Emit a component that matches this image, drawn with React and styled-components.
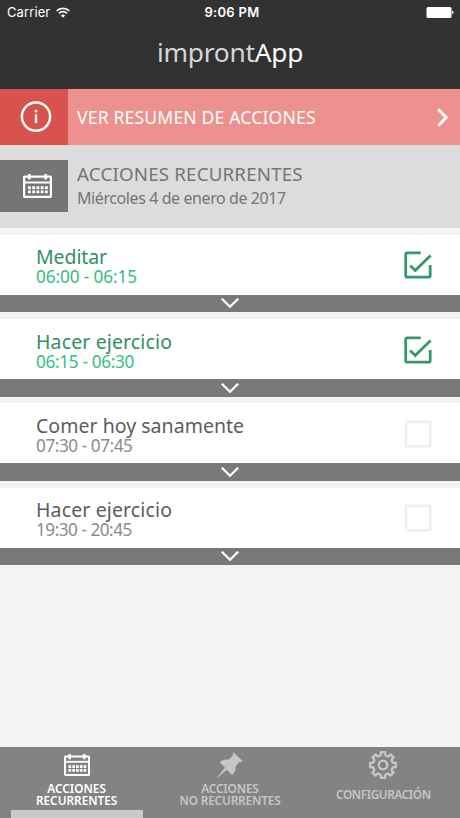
import styled, { createGlobalStyle } from 'styled-components'

const GlobalStyle = createGlobalStyle`
  * { box-sizing: border-box; }
  body {
    margin: 0;
    background: #f3f3f3;
    font-family: "Noto Sans", "Open Sans", sans-serif;
  }
  svg { display: block; }
`;

const Screen = styled.div`
  display: flex;
  flex-direction: column;
  width: 460px;
  height: 818px;
  overflow: hidden;
  background: #f3f3f3;
`;

const Header = styled.header`
  height: 89px;
  flex: none;
  background: #323232;
  color: #fff;
`;

const StatusBar = styled.div`
  display: grid;
  grid-template-columns: 1fr auto 1fr;
  align-items: center;
  height: 24px;
  padding: 0 6px 0 7px;
  font-family: Inter, sans-serif;
  font-size: 13px;
`;

const Carrier = styled.div`
  display: flex;
  align-items: center;
  gap: 6px;
  letter-spacing: 0.1px;
`;

const Clock = styled.div`
  padding-left: 3px;
  font-weight: 600;
  letter-spacing: 0.3px;
`;

const Battery = styled.div`
  display: flex;
  justify-content: flex-end;
`;

const AppTitle = styled.h1`
  margin: 11px 0 0;
  text-align: center;
  font-size: 26.3px;
  line-height: 34px;
  font-weight: 400;
  letter-spacing: -0.25px;
  color: #d6d6d6;

  span { color: #fff; }
`;

const SummaryBar = styled.button`
  display: flex;
  align-items: stretch;
  flex: none;
  height: 56px;
  padding: 0 12px 0 0;
  border: 0;
  background: #ec918d;
  color: #fff;
  font-family: inherit;
  text-align: left;
`;

const IconBox = styled.div`
  display: flex;
  align-items: center;
  justify-content: center;
  flex: none;
  width: 68px;
  height: ${p => p.$height};
  padding-left: ${p => p.$shift};
  background: ${p => p.$color};
`;

const SummaryLabel = styled.span`
  flex: 1;
  padding-left: 9px;
  font-size: 17.6px;
  line-height: 56px;
  letter-spacing: 0.15px;
  white-space: nowrap;
`;

const ArrowWrap = styled.span`
  display: flex;
  align-items: center;
`;

const DateBar = styled.section`
  display: flex;
  flex: none;
  height: 83px;
  padding-top: 15px;
  background: #dcdcdc;
  color: #757575;
`;

const DateText = styled.div`
  padding: 2px 0 0 9px;
`;

const Line = styled.div`
  font-size: ${p => p.$size};
  line-height: ${p => p.$line};
  letter-spacing: ${p => p.$spacing || 'normal'};
  color: ${p => p.$color || 'inherit'};
  white-space: nowrap;
`;

const TaskList = styled.main`
  flex: 1;
`;

const Task = styled.article`
  margin-top: 6.7px;
`;

const TaskBody = styled.div`
  display: flex;
  justify-content: space-between;
  height: 60px;
  padding: 10.5px 28px 0 36px;
  background: #fff;
`;

const TaskText = styled.div`
  padding-top: 2px;
`;

const CheckWrap = styled.div`
  padding-top: 6px;
`;

const Expander = styled.div`
  display: flex;
  align-items: center;
  justify-content: center;
  height: 17.65px;
  padding-bottom: 0.5px;
  background: #787878;
`;

const TabBar = styled.nav`
  display: grid;
  grid-template-columns: repeat(3, 1fr);
  flex: none;
  height: 71px;
  background: #838383;
`;

const Tab = styled.div`
  display: flex;
  flex-direction: column;
  align-items: center;
  color: ${p => (p.$active ? '#fff' : '#c6c6c6')};
`;

const TabIcon = styled.div`
  display: flex;
  align-items: center;
  height: 35px;
`;

const TabLabel = styled.div`
  display: flex;
  flex-direction: column;
  align-items: center;
  justify-content: center;
  height: 25px;
  padding-bottom: 1.2px;
  font-size: 11.8px;
  line-height: 12.3px;
  font-weight: 600;
  letter-spacing: ${p => p.$spacing};
  white-space: nowrap;
`;

const TabMarker = styled.div`
  width: 132px;
  height: 8px;
  margin-top: 3px;
  background: #c9c9c9;
`;

const WifiIcon = () => (
  <svg width="14" height="11" viewBox="0 0 14 11" fill="none" stroke="#fff" strokeWidth="1.7">
    <path d="M0.7 3.9a9 9 0 0 1 12.6 0" />
    <path d="M3 6.3a5.8 5.8 0 0 1 8 0" />
    <path d="M7 10.7L4.9 8.5a3 3 0 0 1 4.2 0z" fill="#fff" stroke="none" />
  </svg>
)

const BatteryIcon = () => (
  <svg width="28" height="11" viewBox="0 0 28 11" fill="#fff">
    <rect x="0.5" y="0" width="25" height="11" rx="1.6" />
    <path d="M26.2 3.6q1.4 0.6 1.4 1.9t-1.4 1.9z" />
  </svg>
)

const InfoIcon = () => (
  <svg width="32" height="32" viewBox="0 0 32 32" fill="none" stroke="#fff">
    <circle cx="16" cy="15.6" r="14.1" strokeWidth="2.4" />
    <path d="M16 13.2v8.8" strokeWidth="2.4" />
    <circle cx="16" cy="10.2" r="1.4" fill="#fff" stroke="none" />
  </svg>
)

const CalendarIcon = ({ width, height }) => (
  <svg width={width} height={height} viewBox="0 0 29 24" preserveAspectRatio="none" fill="none" stroke="#fff">
    <rect x="1.1" y="2.7" width="26.8" height="20.2" rx="0.6" strokeWidth="2.2" />
    <path d="M1 8.5h27" strokeWidth="2" />
    <path d="M6.3 0v5.6M22.7 0v5.6" strokeWidth="2.6" />
    <path d="M5 13.7h19.8M5 17.9h19.8" strokeWidth="2.9" strokeDasharray="2.9 1.33" />
  </svg>
)

const ArrowRight = () => (
  <svg width="11" height="19" viewBox="0 0 11 19" fill="none" stroke="#fff" strokeWidth="2.8">
    <path d="M1.2 1.3l8 8.2l-8 8.2" />
  </svg>
)

const ArrowDown = () => (
  <svg width="18" height="10" viewBox="0 0 18 10" fill="none" stroke="#fff" strokeWidth="2.3">
    <path d="M0.8 0.7l8.2 8l8.2-8" />
  </svg>
)

const CheckIcon = ({ done }) => done ? (
  <svg width="28" height="28" viewBox="0 0 28 28" fill="none" stroke="#36976b" strokeWidth="2.8">
    <path d="M16.8 1.8H3.3Q1.7 1.8 1.7 3.5V24.5Q1.7 26.2 3.3 26.2H24.6Q26.2 26.2 26.2 24.5V14" />
    <path d="M6.2 14.6l5 5L26.6 4.4" />
  </svg>
) : (
  <svg width="28" height="28" viewBox="0 0 28 28" fill="none" stroke="#efefef" strokeWidth="2.6">
    <rect x="1.9" y="1.9" width="24.4" height="24.4" rx="1.2" />
  </svg>
)

const PinIcon = () => (
  <svg width="26" height="26" viewBox="0 0 26 26" fill="currentColor">
    <path d="M16.6 0.4L25.6 9Q24.5 10.5 22.4 9.8L18.4 14.4Q19.4 19.5 15 23L9.8 17.7L1 25.2L0.6 24.8L8 15.8L2.6 10.2Q6.5 6.6 11.3 7.8L16 3.6Q15.3 1.5 16.6 0.4Z" />
  </svg>
)

// 8 teeth around a ring
const gearPath = () => {
  const pts = []
  for (let i = 0; i < 8; i++) {
    const a = i * 45
    const steps = [[-16, 9.9], [-11, 10.8], [-10, 13], [10, 13], [11, 10.8], [16, 9.9]]
    steps.forEach(([d, r]) => {
      const t = ((a + d - 90) * Math.PI) / 180
      pts.push(`${(15 + r * Math.cos(t)).toFixed(2)} ${(15 + r * Math.sin(t)).toFixed(2)}`)
    })
  }
  return `M${pts.join('L')}Z`
}

const GearIcon = () => (
  <svg width="30" height="30" viewBox="0 0 30 30" fill="none" stroke="currentColor" strokeWidth="2.3" strokeLinejoin="round">
    <path d={gearPath()} />
    <circle cx="15" cy="15" r="4.3" />
  </svg>
)

const tasks = [
  { name: 'Meditar', time: '06:00 - 06:15', done: true, nameSpacing: '-0.1px', timeSpacing: '-0.1px' },
  { name: 'Hacer ejercicio', time: '06:15 - 06:30', done: true, nameSpacing: '0.13px', timeSpacing: '-0.33px' },
  { name: 'Comer hoy sanamente', time: '07:30 - 07:45', done: false, nameSpacing: '0.03px', timeSpacing: '-0.45px' },
  { name: 'Hacer ejercicio', time: '19:30 - 20:45', done: false, nameSpacing: '0.13px', timeSpacing: '-0.5px' },
]

export default function App() {
  return <Screen>
    <GlobalStyle />
    <Header>
      <StatusBar>
        <Carrier>Carrier <WifiIcon /></Carrier>
        <Clock>9:06 PM</Clock>
        <Battery><BatteryIcon /></Battery>
      </StatusBar>
      <AppTitle>impront<span>App</span></AppTitle>
    </Header>
    <SummaryBar>
      <IconBox $color="#d8534e" $height="56px" $shift="4px"><InfoIcon /></IconBox>
      <SummaryLabel>VER RESUMEN DE ACCIONES</SummaryLabel>
      <ArrowWrap><ArrowRight /></ArrowWrap>
    </SummaryBar>
    <DateBar>
      <IconBox $color="#757575" $height="51.5px" $shift="7px"><CalendarIcon width={29} height={24} /></IconBox>
      <DateText>
        <Line $size="18.7px" $line="24px" $spacing="0.2px">ACCIONES RECURRENTES</Line>
        <Line $size="16px" $line="24px" $spacing="-0.41px">Miércoles 4 de enero de 2017</Line>
      </DateText>
    </DateBar>
    <TaskList>
      {tasks.map((task, i) => (
        <Task key={i}>
          <TaskBody>
            <TaskText>
              <Line $size="19.5px" $line="20px" $spacing={task.nameSpacing} $color={task.done ? '#2f8f62' : '#5c5c5c'}>{task.name}</Line>
              <Line $size="17.2px" $line="20.8px" $spacing={task.timeSpacing} $color={task.done ? '#35bd80' : '#8c8c8c'}>{task.time}</Line>
            </TaskText>
            <CheckWrap><CheckIcon done={task.done} /></CheckWrap>
          </TaskBody>
          <Expander><ArrowDown /></Expander>
        </Task>
      ))}
    </TaskList>
    <TabBar>
      <Tab $active>
        <TabIcon><CalendarIcon width={26} height={22} /></TabIcon>
        <TabLabel $spacing="0px"><span>ACCIONES</span><span>RECURRENTES</span></TabLabel>
        <TabMarker />
      </Tab>
      <Tab>
        <TabIcon><PinIcon /></TabIcon>
        <TabLabel $spacing="-0.15px"><span>ACCIONES</span><span>NO RECURRENTES</span></TabLabel>
      </Tab>
      <Tab>
        <TabIcon><GearIcon /></TabIcon>
        <TabLabel $spacing="-0.4px"><span>CONFIGURACIÓN</span></TabLabel>
      </Tab>
    </TabBar>
  </Screen>
}
